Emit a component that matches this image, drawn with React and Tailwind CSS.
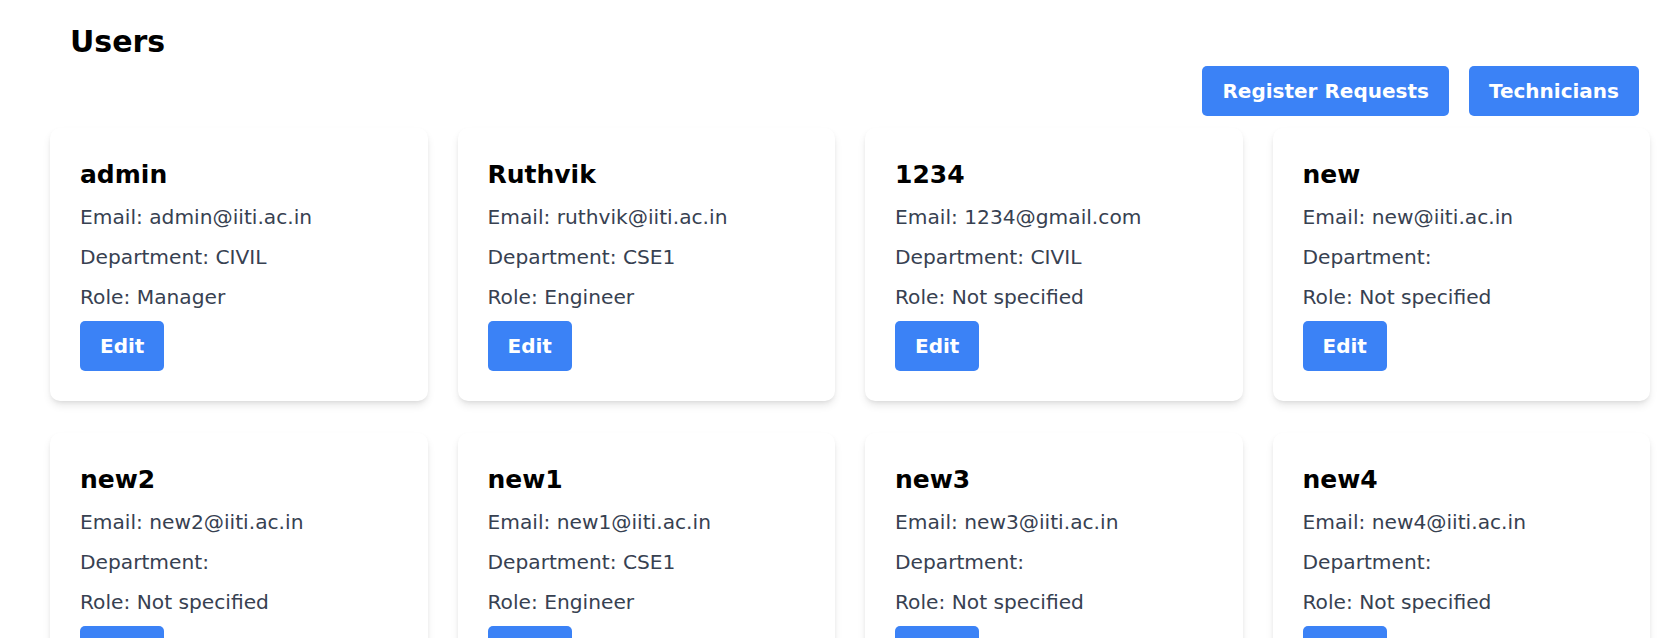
import React from "react";

const users = [
    { name: "admin", email: "admin@iiti.ac.in", department: "CIVIL", role: "Manager" },
    { name: "Ruthvik", email: "ruthvik@iiti.ac.in", department: "CSE1", role: "Engineer" },
    { name: "1234", email: "1234@gmail.com", department: "CIVIL", role: "" },
    { name: "new", email: "new@iiti.ac.in", department: "", role: "" },
    { name: "new2", email: "new2@iiti.ac.in", department: "", role: "" },
    { name: "new1", email: "new1@iiti.ac.in", department: "CSE1", role: "Engineer" },
    { name: "new3", email: "new3@iiti.ac.in", department: "", role: "" },
    { name: "new4", email: "new4@iiti.ac.in", department: "", role: "" },
];

const btn =
    "bg-[#3b82f6] text-white font-bold text-[20px] leading-[30px] px-[20px] py-[10px] rounded-[5px]";

const UserCard = ({ user }) => (
    <div className="bg-white rounded-[10px] p-[30px] shadow-[0_5px_8px_-1px_rgba(0,0,0,0.1),0_2px_5px_-2px_rgba(0,0,0,0.1)]">
        <h2 className="text-[25px] leading-[33px] font-bold text-black mb-[11px]">{user.name}</h2>
        <p className="text-[20.2px] leading-[30px] text-[#374151] mb-[10px]">Email: {user.email}</p>
        <p className="text-[20.2px] leading-[30px] text-[#374151] mb-[10px]">Department: {user.department}</p>
        <p className="text-[20.2px] leading-[30px] text-[#374151] mb-[9px]">
            Role: {user.role || "Not specified"}
        </p>
        <button className={btn}>Edit</button>
    </div>
);

export default function App() {
    return (
        <div className="min-h-screen bg-white pt-[24px] pl-[50px] pr-[29px] font-['DejaVu_Sans',sans-serif]">
            <h1 className="ml-[20px] text-[30px] leading-[36px] font-bold text-black">Users</h1>

            {/* top actions */}
            <div className="flex justify-end gap-[20px] mt-[6px] mr-[11px]">
                <button className={btn}>Register Requests</button>
                <button className={btn}>Technicians</button>
            </div>

            <div className="grid grid-cols-4 gap-x-[30px] gap-y-[32px] mt-[12px] pb-[40px]">
                {users.map((u) => (
                    <UserCard key={u.name} user={u} />
                ))}
            </div>
        </div>
    );
}
